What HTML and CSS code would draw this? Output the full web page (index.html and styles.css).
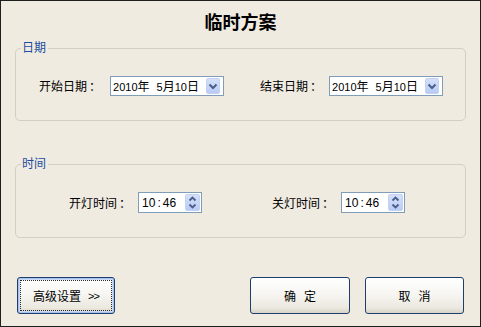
FILE: index.html
```html
<!DOCTYPE html>
<html lang="zh-CN">
<head>
<meta charset="utf-8">
<title>临时方案</title>
<link rel="stylesheet" href="styles.css">
</head>
<body>
<div class="dialog">
  <div class="title">临时方案</div>

  <div class="group group-date">
    <div class="legend">日期</div>
    <div class="row">
      <div class="field field-start">
        <span class="label">开始日期<span class="colon">：</span></span>
        <div class="combo">
          <span class="value">2010<span class="cj">年</span><span class="gap">5</span><span class="cj">月</span>10<span class="cj">日</span></span>
          <span class="drop">
            <svg width="14" height="16" viewBox="0 0 14 16"><path d="M3.5 6.5 L7 10 L10.5 6.5" fill="none" stroke="#4a5d86" stroke-width="2"/></svg>
          </span>
        </div>
      </div>
      <div class="field field-end">
        <span class="label">结束日期<span class="colon">：</span></span>
        <div class="combo">
          <span class="value">2010<span class="cj">年</span><span class="gap">5</span><span class="cj">月</span>10<span class="cj">日</span></span>
          <span class="drop">
            <svg width="14" height="16" viewBox="0 0 14 16"><path d="M3.5 6.5 L7 10 L10.5 6.5" fill="none" stroke="#4a5d86" stroke-width="2"/></svg>
          </span>
        </div>
      </div>
    </div>
  </div>

  <div class="group group-time">
    <div class="legend">时间</div>
    <div class="row">
      <div class="field field-on">
        <span class="label">开灯时间<span class="colon">：</span></span>
        <div class="spinner">
          <span class="value">10<span class="sep">:</span>46</span>
          <span class="spin">
            <svg width="15" height="17" viewBox="0 0 15 17"><path d="M4.5 6.5 L7.5 3.5 L10.5 6.5" fill="none" stroke="#4a5d86" stroke-width="1.8"/><path d="M4.5 10.5 L7.5 13.5 L10.5 10.5" fill="none" stroke="#4a5d86" stroke-width="1.8"/></svg>
          </span>
        </div>
      </div>
      <div class="field field-off">
        <span class="label">关灯时间<span class="colon">：</span></span>
        <div class="spinner">
          <span class="value">10<span class="sep">:</span>46</span>
          <span class="spin">
            <svg width="15" height="17" viewBox="0 0 15 17"><path d="M4.5 6.5 L7.5 3.5 L10.5 6.5" fill="none" stroke="#4a5d86" stroke-width="1.8"/><path d="M4.5 10.5 L7.5 13.5 L10.5 10.5" fill="none" stroke="#4a5d86" stroke-width="1.8"/></svg>
          </span>
        </div>
      </div>
    </div>
  </div>

  <div class="buttons">
    <button class="btn btn-adv focused"><span class="focus-ring">高级设置<span class="arrows">&gt;&gt;</span></span></button>
    <button class="btn btn-ok"><span class="focus-ring"><span class="spaced">确定</span></span></button>
    <button class="btn btn-cancel"><span class="focus-ring"><span class="spaced">取消</span></span></button>
  </div>
</div>
</body>
</html>
```

FILE: styles.css
```css
* { box-sizing: border-box; }
html, body { margin: 0; padding: 0; }
body {
  width: 481px;
  height: 327px;
  font-family: "Noto Sans CJK SC", "Noto Sans", sans-serif;
  font-size: 12px;
  color: #000;
}
.dialog {
  width: 481px;
  height: 327px;
  border: 1px solid #1e1e1e;
  background: #f0ebe1;
  padding: 0 14px;
  display: flex;
  flex-direction: column;
}
.title {
  height: 40px;
  line-height: 40px;
  text-align: center;
  font-size: 18px;
  font-weight: bold;
  color: #000;
}
.group {
  border: 1px solid #d4cfc3;
  border-radius: 5px;
}
.group-date { margin-top: 7px; height: 73px; }
.group-time { margin-top: 43px; height: 74px; }
.legend {
  display: block;
  width: fit-content;
  margin: -9px 0 0 5px;
  padding: 0 2px 0 1px;
  height: 14px;
  line-height: 14px;
  background: #f0ebe1;
  color: #1c4c9e;
  font-size: 12px;
}
.row {
  display: flex;
  align-items: center;
}
.group-date .row { margin-top: 22px; }
.group-time .row { margin-top: 22px; }
.field {
  display: flex;
  align-items: center;
}
.label {
  font-size: 12px;
  line-height: 14px;
  white-space: nowrap;
}
.colon { margin-left: 2px; }
.field-start { margin-left: 23px; }
.field-start .label { margin-right: 9px; }
.field-end { margin-left: 36px; }
.field-end .label { margin-right: 7px; }
.field-on { margin-left: 53px; }
.field-on .label { margin-right: 7px; }
.field-off { margin-left: 70px; }
.field-off .label { margin-right: 7px; }

.combo, .spinner {
  display: flex;
  align-items: center;
  justify-content: space-between;
  background: #fff;
  border: 1px solid #7f9db9;
  font-family: "Liberation Sans", "Noto Sans CJK SC", sans-serif;
  font-size: 11px;
}
.combo { width: 114px; height: 20px; padding-left: 2px; }
.spinner { width: 64px; height: 21px; padding-left: 3px; font-size: 12px; }
.value { white-space: nowrap; line-height: 14px; }
.cj { font-family: "Noto Sans CJK SC", sans-serif; font-size: 12px; }
.gap { margin-left: 7px; }
.sep { padding: 0 2px; }
.drop {
  display: block;
  width: 14px;
  height: 16px;
  margin-right: 3px;
  border-radius: 2px;
  background: linear-gradient(#d4e0fb, #b9cbf5);
  border: 1px solid #c3d1f3;
}
.drop svg, .spin svg { display: block; margin: -1px; }
.spin {
  display: block;
  width: 15px;
  height: 17px;
  margin-right: 1px;
  border-radius: 2px;
  background: linear-gradient(#d4e0fb, #b9cbf5);
  border: 1px solid #c3d1f3;
}

.buttons {
  margin-top: 39px;
  display: flex;
  padding: 0 2px;
}
.btn {
  height: 37px;
  border: 1px solid #1c3f6e;
  border-radius: 3px;
  background: linear-gradient(#ffffff 0%, #f7f6f2 45%, #ebe8df 85%, #d8d3c6 100%);
  font-family: "Noto Sans CJK SC", sans-serif;
  font-size: 12px;
  color: #000;
  padding: 2px;
  display: flex;
}
.focus-ring {
  flex: 1;
  display: flex;
  align-items: center;
  justify-content: center;
  border: 1px dotted transparent;
  white-space: nowrap;
}
.arrows {
  margin-left: 7px;
  font-family: "Liberation Sans", sans-serif;
  font-size: 11px;
  letter-spacing: -1px;
}
.spaced { letter-spacing: 8px; margin-right: -8px; }
.btn-adv { width: 98px; }
.btn-ok { width: 100px; margin-left: auto; }
.btn-cancel { width: 99px; margin-left: 15px; }
.focused {
  box-shadow: inset 0 0 0 1px #a9c0ea, inset 0 0 0 2px #c9d9f6;
}
.focused .focus-ring { border-color: #2a2a2a; }
```
